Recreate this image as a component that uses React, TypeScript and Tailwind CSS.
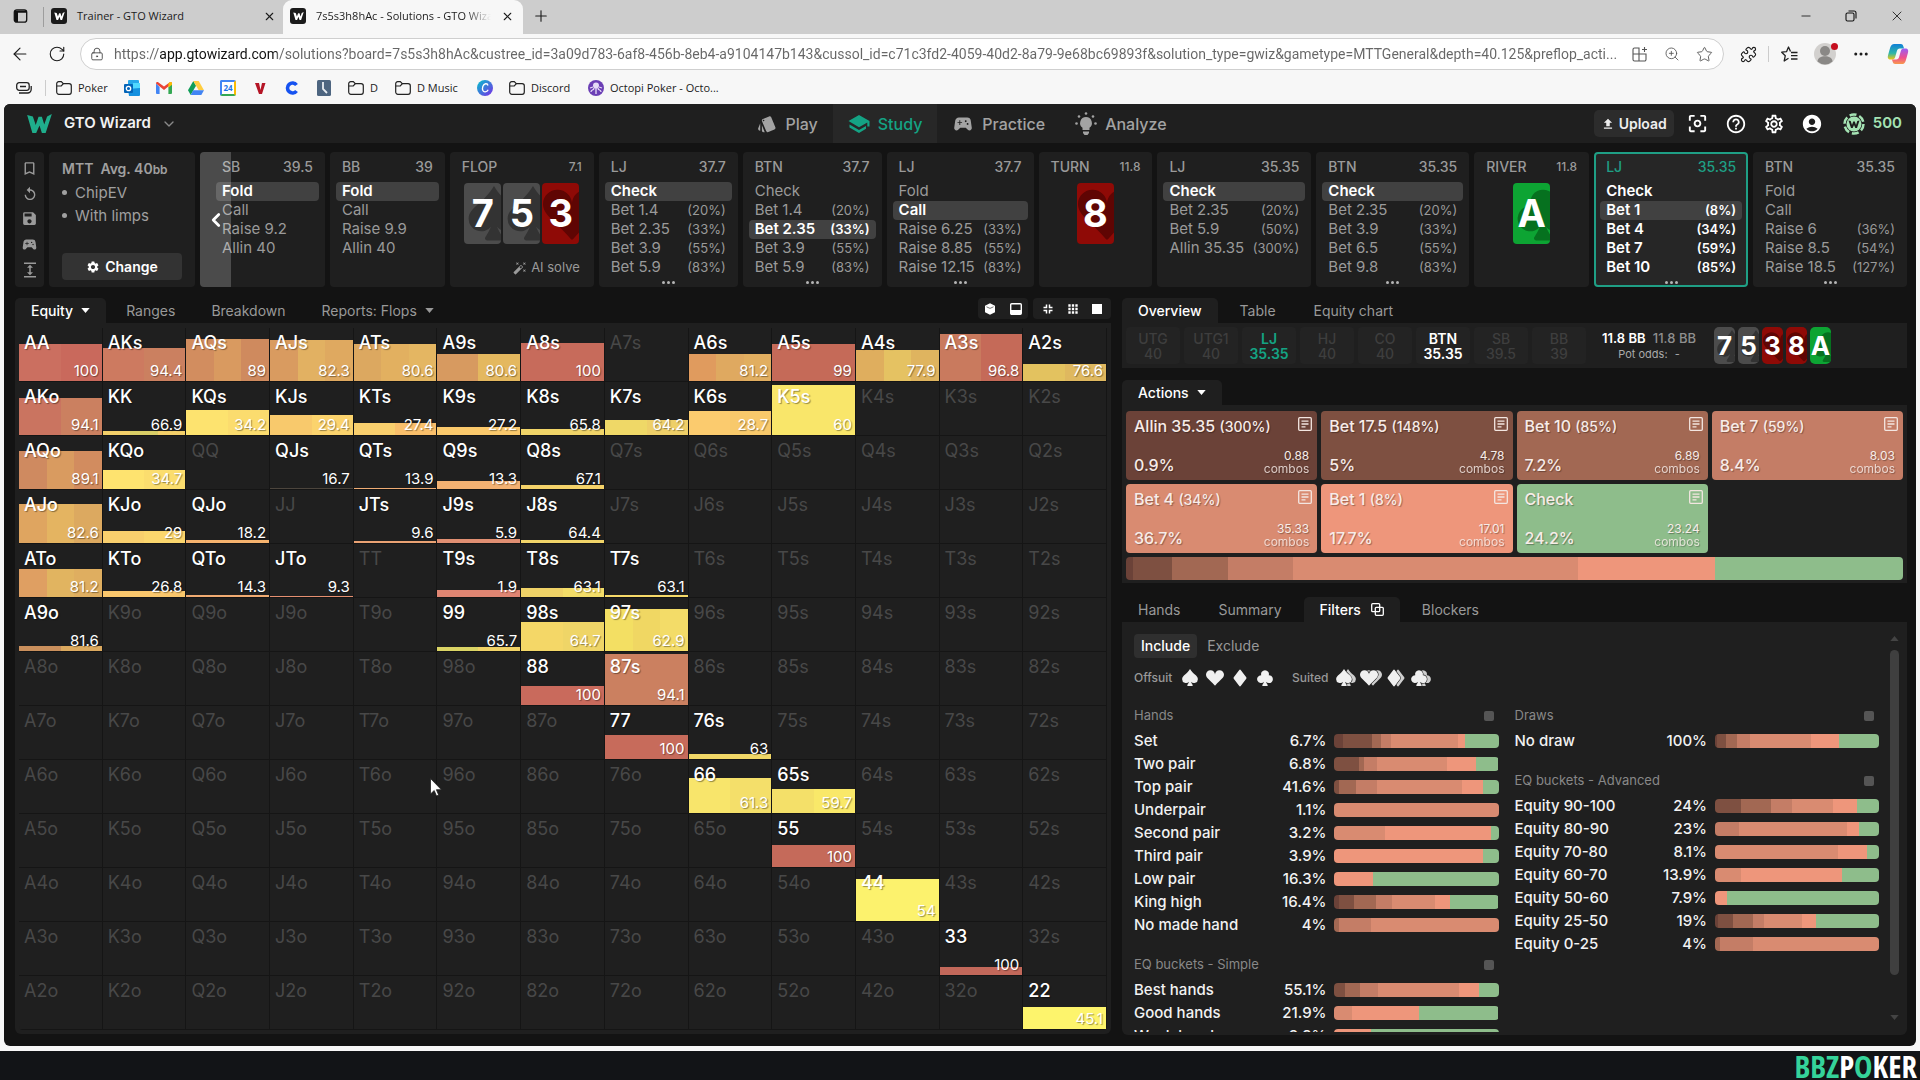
'use client';

import type { ReactNode } from 'react';
import clsx from 'clsx';
import {
  ArrowLeft,
  ChevronDown,
  ChevronLeft,
  Ellipsis,
  LockKeyhole,
  Minus,
  Plus,
  Puzzle,
  RotateCw,
  Star,
  X,
  ZoomIn,
} from 'lucide-react';
import {
  MdAccountCircle,
  MdApps,
  MdAutoFixHigh,
  MdBookmarkBorder,
  MdCenterFocusWeak,
  MdExpand,
  MdFileUpload,
  MdHelpOutline,
  MdOutlineSettings,
  MdReplay,
  MdSave,
  MdSchool,
  MdSettings,
  MdSportsEsports,
  MdStyle,
} from 'react-icons/md';
import { BsSuitClubFill, BsSuitDiamondFill, BsSuitHeartFill, BsSuitSpadeFill } from 'react-icons/bs';

type Suit = 'spade' | 'heart' | 'diamond' | 'club';

interface Card {
  rank: string;
  suit: Suit;
}

interface Option {
  label: string;
  pct?: string;
}

interface Street {
  name: string;
  stack: string;
  options?: Option[];
  selected?: number;
  active?: boolean;
  more?: boolean;
  cards?: Card[];
  aiSolve?: boolean;
}

interface HandCell {
  equity: string;
  // height of the coloured bar, in px
  weight: number;
  colors: string[];
}

interface BarRow {
  label: string;
  pct: string;
  // all-in, 17.5, 10, 7, 4, 1, check
  split: number[];
}

const ACTION_COLORS = ['#6b4238', '#7e5041', '#a26853', '#c47d66', '#d98b71', '#ee967b', '#8ebd8b'];

const suitIcons = {
  spade: BsSuitSpadeFill,
  heart: BsSuitHeartFill,
  diamond: BsSuitDiamondFill,
  club: BsSuitClubFill,
};

const streets: Street[] = [
  {
    name: 'SB',
    stack: '39.5',
    selected: 0,
    options: [{ label: 'Fold' }, { label: 'Call' }, { label: 'Raise 9.2' }, { label: 'Allin 40' }],
  },
  {
    name: 'BB',
    stack: '39',
    selected: 0,
    options: [{ label: 'Fold' }, { label: 'Call' }, { label: 'Raise 9.9' }, { label: 'Allin 40' }],
  },
  {
    name: 'FLOP',
    stack: '7.1',
    cards: [
      { rank: '7', suit: 'spade' },
      { rank: '5', suit: 'spade' },
      { rank: '3', suit: 'heart' },
    ],
    aiSolve: true,
  },
  {
    name: 'LJ',
    stack: '37.7',
    selected: 0,
    more: true,
    options: [
      { label: 'Check' },
      { label: 'Bet 1.4', pct: '(20%)' },
      { label: 'Bet 2.35', pct: '(33%)' },
      { label: 'Bet 3.9', pct: '(55%)' },
      { label: 'Bet 5.9', pct: '(83%)' },
    ],
  },
  {
    name: 'BTN',
    stack: '37.7',
    selected: 2,
    more: true,
    options: [
      { label: 'Check' },
      { label: 'Bet 1.4', pct: '(20%)' },
      { label: 'Bet 2.35', pct: '(33%)' },
      { label: 'Bet 3.9', pct: '(55%)' },
      { label: 'Bet 5.9', pct: '(83%)' },
    ],
  },
  {
    name: 'LJ',
    stack: '37.7',
    selected: 1,
    more: true,
    options: [
      { label: 'Fold' },
      { label: 'Call' },
      { label: 'Raise 6.25', pct: '(33%)' },
      { label: 'Raise 8.85', pct: '(55%)' },
      { label: 'Raise 12.15', pct: '(83%)' },
    ],
  },
  { name: 'TURN', stack: '11.8', cards: [{ rank: '8', suit: 'heart' }] },
  {
    name: 'LJ',
    stack: '35.35',
    selected: 0,
    options: [
      { label: 'Check' },
      { label: 'Bet 2.35', pct: '(20%)' },
      { label: 'Bet 5.9', pct: '(50%)' },
      { label: 'Allin 35.35', pct: '(300%)' },
    ],
  },
  {
    name: 'BTN',
    stack: '35.35',
    selected: 0,
    more: true,
    options: [
      { label: 'Check' },
      { label: 'Bet 2.35', pct: '(20%)' },
      { label: 'Bet 3.9', pct: '(33%)' },
      { label: 'Bet 6.5', pct: '(55%)' },
      { label: 'Bet 9.8', pct: '(83%)' },
    ],
  },
  { name: 'RIVER', stack: '11.8', cards: [{ rank: 'A', suit: 'club' }] },
  {
    name: 'LJ',
    stack: '35.35',
    selected: 1,
    active: true,
    more: true,
    options: [
      { label: 'Check' },
      { label: 'Bet 1', pct: '(8%)' },
      { label: 'Bet 4', pct: '(34%)' },
      { label: 'Bet 7', pct: '(59%)' },
      { label: 'Bet 10', pct: '(85%)' },
    ],
  },
  {
    name: 'BTN',
    stack: '35.35',
    more: true,
    options: [
      { label: 'Fold' },
      { label: 'Call' },
      { label: 'Raise 6', pct: '(36%)' },
      { label: 'Raise 8.5', pct: '(54%)' },
      { label: 'Raise 18.5', pct: '(127%)' },
    ],
  },
];

const RANKS = ['A', 'K', 'Q', 'J', 'T', '9', '8', '7', '6', '5', '4', '3', '2'];

const hands: Record<string, HandCell> = {
  AA: { equity: '100', weight: 37, colors: ['#cb6f60', '#c9695c'] },
  AKs: { equity: '94.4', weight: 33, colors: ['#cd7a60', '#cb8060'] },
  AQs: { equity: '89', weight: 42, colors: ['#d28d5f', '#d99a60', '#cf8a5e'] },
  AJs: { equity: '82.3', weight: 41, colors: ['#d99b60', '#e2b162', '#dfa960'] },
  ATs: { equity: '80.6', weight: 37, colors: ['#dca860', '#e2b060', '#e4b662'] },
  A9s: { equity: '80.6', weight: 27, colors: ['#d79a60', '#e4b85f'] },
  A8s: { equity: '100', weight: 38, colors: ['#c76b5b'] },
  A6s: { equity: '81.2', weight: 27, colors: ['#e09b5e', '#dfa960', '#e1ae60'] },
  A5s: { equity: '99', weight: 37, colors: ['#c56a58'] },
  A4s: { equity: '77.9', weight: 31, colors: ['#dfae5e', '#e5c262', '#dfb45f'] },
  A3s: { equity: '96.8', weight: 47, colors: ['#c97a5e', '#c56a58'] },
  A2s: { equity: '76.6', weight: 17, colors: ['#e3c25f', '#dfb85f'] },
  AKo: { equity: '94.1', weight: 37, colors: ['#ca7460', '#cb8060'] },
  KK: { equity: '66.9', weight: 4, colors: ['#f3cf69', '#d8cd66', '#f3cf69'] },
  KQs: { equity: '34.2', weight: 25, colors: ['#fde36f', '#fbdc6e'] },
  KJs: { equity: '29.4', weight: 20, colors: ['#f8c96c', '#fbd36d'] },
  KTs: { equity: '27.4', weight: 12, colors: ['#f9cf6d', '#f9bf6b'] },
  K9s: { equity: '27.2', weight: 8, colors: ['#fac96c'] },
  K8s: { equity: '65.8', weight: 6, colors: ['#f0d468'] },
  K7s: { equity: '64.2', weight: 15, colors: ['#efd867', '#eecf68'] },
  K6s: { equity: '28.7', weight: 24, colors: ['#fbcb6e', '#f8c96b'] },
  K5s: { equity: '60', weight: 50, colors: ['#f9e66a'] },
  AQo: { equity: '89.1', weight: 38, colors: ['#cf8a60', '#d99b60', '#d28c5f'] },
  KQo: { equity: '34.7', weight: 19, colors: ['#fee36f', '#fbdd6e'] },
  QJs: { equity: '16.7', weight: 1, colors: ['#4c453d'] },
  QTs: { equity: '13.9', weight: 1, colors: ['#efac74'] },
  Q9s: { equity: '13.3', weight: 8, colors: ['#f3b172'] },
  Q8s: { equity: '67.1', weight: 4, colors: ['#f4d269'] },
  AJo: { equity: '82.6', weight: 39, colors: ['#dfa560', '#e4b461', '#dca960'] },
  KJo: { equity: '29', weight: 12, colors: ['#f9cf6d', '#fbd66d'] },
  QJo: { equity: '18.2', weight: 3, colors: ['#f6b36e'] },
  JTs: { equity: '9.6', weight: 2, colors: ['#eaa273'] },
  J9s: { equity: '5.9', weight: 4, colors: ['#e08f72'] },
  J8s: { equity: '64.4', weight: 3, colors: ['#f1d468'] },
  ATo: { equity: '81.2', weight: 28, colors: ['#df9f62', '#e1b460', '#dfae60'] },
  KTo: { equity: '26.8', weight: 6, colors: ['#fac76c'] },
  QTo: { equity: '14.3', weight: 2, colors: ['#f0ab72'] },
  JTo: { equity: '9.3', weight: 1, colors: ['#e58f70'] },
  T9s: { equity: '1.9', weight: 7, colors: ['#df8572'] },
  T8s: { equity: '63.1', weight: 9, colors: ['#efd267', '#f3dd68'] },
  T7s: { equity: '63.1', weight: 2, colors: ['#f6d969'] },
  A9o: { equity: '81.6', weight: 5, colors: ['#c98f5c', '#dba95f'] },
  '99': { equity: '65.7', weight: 4, colors: ['#dad465', '#f1d367'] },
  '98s': { equity: '64.7', weight: 29, colors: ['#f4d767', '#efd567'] },
  '97s': { equity: '62.9', weight: 42, colors: ['#f3df63', '#f0d763', '#f3dc68'] },
  '88': { equity: '100', weight: 19, colors: ['#c96a5c'] },
  '87s': { equity: '94.1', weight: 51, colors: ['#cb8060'] },
  '77': { equity: '100', weight: 24, colors: ['#c76b5b'] },
  '76s': { equity: '63', weight: 5, colors: ['#f1d767'] },
  '66': { equity: '61.3', weight: 35, colors: ['#f8e56b', '#f4df6a'] },
  '65s': { equity: '59.7', weight: 24, colors: ['#f4e069', '#f9e869'] },
  '55': { equity: '100', weight: 22, colors: ['#c56a5a'] },
  '44': { equity: '54', weight: 42, colors: ['#fcf26d'] },
  '33': { equity: '100', weight: 8, colors: ['#c2685a'] },
  '22': { equity: '45.1', weight: 22, colors: ['#fdf46c'] },
};

const positions = [
  { name: 'UTG', stack: '40' },
  { name: 'UTG1', stack: '40' },
  { name: 'LJ', stack: '35.35', tone: 'text-[#14a384]' },
  { name: 'HJ', stack: '40' },
  { name: 'CO', stack: '40' },
  { name: 'BTN', stack: '35.35', tone: 'text-white' },
  { name: 'SB', stack: '39.5' },
  { name: 'BB', stack: '39' },
];

const board: Card[] = [
  { rank: '7', suit: 'spade' },
  { rank: '5', suit: 'spade' },
  { rank: '3', suit: 'heart' },
  { rank: '8', suit: 'heart' },
  { rank: 'A', suit: 'club' },
];

const actions = [
  { label: 'Allin 35.35', size: '(300%)', pct: '0.9%', combos: '0.88', bg: 'bg-[#6b4238]' },
  { label: 'Bet 17.5', size: '(148%)', pct: '5%', combos: '4.78', bg: 'bg-[#7e5041]' },
  { label: 'Bet 10', size: '(85%)', pct: '7.2%', combos: '6.89', bg: 'bg-[#a26853]' },
  { label: 'Bet 7', size: '(59%)', pct: '8.4%', combos: '8.03', bg: 'bg-[#c47d66]' },
  { label: 'Bet 4', size: '(34%)', pct: '36.7%', combos: '35.33', bg: 'bg-[#d98b71]' },
  { label: 'Bet 1', size: '(8%)', pct: '17.7%', combos: '17.01', bg: 'bg-[#ee967b]' },
  { label: 'Check', size: '', pct: '24.2%', combos: '23.24', bg: 'bg-[#8ebd8b]' },
];

const madeHands: BarRow[] = [
  { label: 'Set', pct: '6.7%', split: [17, 55, 17, 21, 128, 15, 64] },
  { label: 'Two pair', pct: '6.8%', split: [0, 48, 8, 26, 134, 57, 43] },
  { label: 'Top pair', pct: '41.6%', split: [0, 8, 33, 40, 164, 41, 30] },
  { label: 'Underpair', pct: '1.1%', split: [0, 0, 0, 0, 1, 0, 0] },
  { label: 'Second pair', pct: '3.2%', split: [0, 0, 0, 0, 97, 205, 14] },
  { label: 'Third pair', pct: '3.9%', split: [0, 0, 0, 0, 0, 286, 30] },
  { label: 'Low pair', pct: '16.3%', split: [0, 0, 0, 0, 0, 74, 242] },
  { label: 'King high', pct: '16.4%', split: [8, 30, 43, 30, 83, 30, 94] },
  { label: 'No made hand', pct: '4%', split: [0, 0, 8, 63, 245, 0, 0] },
];

const simpleBuckets: BarRow[] = [
  { label: 'Best hands', pct: '55.1%', split: [0, 20, 29, 35, 155, 40, 37] },
  { label: 'Good hands', pct: '21.9%', split: [0, 0, 0, 0, 33, 130, 153] },
  { label: 'Weak hands', pct: '3.9%', split: [0, 0, 0, 0, 0, 70, 246] },
];

const draws: BarRow[] = [{ label: 'No draw', pct: '100%', split: [3, 18, 22, 25, 118, 56, 77] }];

const advancedBuckets: BarRow[] = [
  { label: 'Equity 90-100', pct: '24%', split: [0, 50, 58, 42, 78, 47, 43] },
  { label: 'Equity 80-90', pct: '23%', split: [0, 0, 0, 47, 209, 24, 38] },
  { label: 'Equity 70-80', pct: '8.1%', split: [0, 0, 0, 0, 238, 56, 24] },
  { label: 'Equity 60-70', pct: '13.9%', split: [0, 0, 0, 0, 50, 196, 72] },
  { label: 'Equity 50-60', pct: '7.9%', split: [0, 0, 0, 0, 0, 23, 295] },
  { label: 'Equity 25-50', pct: '19%', split: [5, 30, 38, 22, 73, 27, 123] },
  { label: 'Equity 0-25', pct: '4%', split: [0, 0, 10, 63, 245, 0, 0] },
];

const URL_TEXT =
  'https://app.gtowizard.com/solutions?board=7s5s3h8hAc&custree_id=3a09d783-6af8-456b-8eb4-a9104147b143&cussol_id=c71c3fd2-4059-40d2-8a79-9e68bc69893f&solution_type=gwiz&gametype=MTTGeneral&depth=40.125&preflop_acti...';

function handName(row: number, col: number) {
  if (row === col) return RANKS[row] + RANKS[col];
  return row < col ? `${RANKS[row]}${RANKS[col]}s` : `${RANKS[col]}${RANKS[row]}o`;
}

// Hard colour stops, one equal slice per colour
function stripes(colors: string[]) {
  const step = 100 / colors.length;
  return `linear-gradient(90deg, ${colors
    .map((color, i) => `${color} ${i * step}% ${(i + 1) * step}%`)
    .join(', ')})`;
}

function Caret({ className }: { className?: string }) {
  return (
    <svg viewBox="0 0 10 6" className={clsx('shrink-0', className ?? 'ml-2 h-[5px] w-[9px]')} fill="currentColor">
      <path d="M0 0h10L5 6z" />
    </svg>
  );
}

function WMark({ className }: { className?: string }) {
  return (
    <svg viewBox="0 0 26 20" className={className} fill="currentColor">
      <path d="M0 1l6 1.5 3 9L12 3h3.500l2.500 8 3-8.500L26 0l-6.500 20h-4L13 12l-3.500 8h-4z" />
    </svg>
  );
}

function Favicon() {
  return (
    <span className="flex size-4 shrink-0 items-center justify-center rounded-[3px] bg-[#1b1b1b] text-white">
      <WMark className="h-2 w-[11px]" />
    </span>
  );
}

function Folder() {
  return (
    <svg viewBox="0 0 16 14" className="h-[14px] w-4 shrink-0" fill="none" stroke="#222" strokeWidth="1.2">
      <path d="M.7 11V2.800C.7 1.600 1.500.7 2.700.7h2.600l2 2h5.800c1.200 0 2.200.9 2.200 2.100V11c0 1.300-1 2.300-2.200 2.300H2.900C1.700 13.300.7 12.300.7 11z" />
      <path d="M.7 5h4.600l2-2.300" />
    </svg>
  );
}

function BrowserChrome() {
  return (
    <header className="font-['Open_Sans','Noto_Sans',sans-serif] text-[#1c1c1c]">
      <div className="flex h-[34px] items-center bg-[#cdcdcd] pr-[15px] *:pb-[2px]">
        <button aria-label="Tab actions" className="ml-[13px]">
          <svg viewBox="0 0 14 14" className="h-[14px] w-[15px]">
            <rect x=".8" y=".8" width="12.400" height="12.400" rx="2.500" fill="none" stroke="#111" strokeWidth="1.300" />
            <path d="M1 1.500h12v2.200H4.500V13H3a2 2 0 0 1-2-2z" fill="#111" />
          </svg>
        </button>
        <span className="ml-[15px] h-5 w-px bg-[#9d9d9d]" />
        <div className="ml-[7px] flex w-[232px] items-center gap-[10px] text-[11px]">
          <Favicon />
          <span className="flex-1">Trainer - GTO Wizard</span>
          <button aria-label="Close Trainer tab" className="mr-[7px]">
            <X size={13} strokeWidth={2} />
          </button>
        </div>
        <div className="flex h-full w-[240px] items-center gap-[10px] rounded-t-[9px] bg-[#f7f7f7] pl-[7px] text-[11px]">
          <Favicon />
          <span className="flex-1 overflow-hidden whitespace-nowrap mask-r-from-85%">
            7s5s3h8hAc - Solutions - GTO Wizard
          </span>
          <button aria-label="Close Solutions tab" className="mr-[9px]">
            <X size={13} strokeWidth={2} />
          </button>
        </div>
        <button aria-label="New tab" className="ml-[9px]">
          <Plus size={18} strokeWidth={1.5} />
        </button>
        <div className="ml-auto flex items-center gap-8">
          <button aria-label="Minimize">
            <Minus size={14} strokeWidth={1.5} />
          </button>
          <button aria-label="Restore">
            <svg viewBox="0 0 12 12" className="size-3" fill="none" stroke="#111" strokeWidth="1.100">
              <rect x="1" y="3" width="8" height="8" rx="1.500" />
              <path d="M3.500 1h5.500a2 2 0 0 1 2 2v5.500" />
            </svg>
          </button>
          <button aria-label="Close window">
            <X size={16} strokeWidth={1.300} />
          </button>
        </div>
      </div>

      <div className="flex h-10 items-center bg-[#f7f7f7] pr-[11px] pl-[10px]">
        <button aria-label="Back" className="mr-[18px]">
          <ArrowLeft size={20} strokeWidth={1.400} />
        </button>
        <button aria-label="Refresh" className="mr-[14px]">
          <RotateCw size={18} strokeWidth={1.500} />
        </button>
        <div className="flex h-8 flex-1 items-center rounded-full border border-[#cfcfcf] bg-white pr-[10px] pl-[9px]">
          <LockKeyhole size={14} strokeWidth={1.500} className="shrink-0 text-[#444]" />
          <input
            aria-label="Address bar"
            className="ml-[10px] min-w-0 flex-1 bg-[linear-gradient(90deg,#666_45px,#111_45px,#111_163px,#666_163px)] bg-clip-text font-['Roboto',sans-serif] text-sm text-transparent outline-none"
            defaultValue={URL_TEXT}
          />
          <div className="flex shrink-0 gap-4 pl-3 text-[#555]">
            <svg viewBox="0 0 16 16" className="size-4" fill="none" stroke="currentColor" strokeWidth="1.100">
              <path d="M7 2H2.500A1.500 1.500 0 0 0 1 3.500V8h6zM1 8v5.500A1.500 1.500 0 0 0 2.500 15H7V8zM7 8h7v5.500a1.500 1.500 0 0 1-1.500 1.500H7zM12.500 1v5M10 3.500h5" />
            </svg>
            <ZoomIn size={16} strokeWidth={1.300} />
            <Star size={17} strokeWidth={1.300} />
          </div>
        </div>
        <Puzzle size={17} strokeWidth={1.600} className="ml-4" />
        <span className="ml-[11px] h-4 w-px bg-[#ccc]" />
        <svg viewBox="0 0 17 16" className="ml-3 h-4 w-[17px]" fill="none" stroke="#222" strokeWidth="1.300" strokeLinejoin="round">
          <path d="M9.500 5.500L7.500 1 5.500 5.700.7 6.200l3.600 3.500L3.200 15l4.300-2.700M10 6.500h6.500M10 9.700h6.500M10 13h6.500" />
        </svg>
        <span className="relative ml-4 size-[22px] rounded-full bg-[#d2d0ce]">
          <svg viewBox="0 0 22 22" className="size-[22px]" fill="#8a8886">
            <circle cx="11" cy="8" r="5" />
            <path d="M3.500 18.500c0-7 15-7 15 0a11 11 0 0 1-15 0z" />
          </svg>
          <span className="absolute top-0 -right-[2px] size-[7px] rounded-full bg-[#c50f1f]" />
        </span>
        <Ellipsis size={18} className="ml-4" />
        <svg viewBox="0 0 24 24" className="ml-[17px] size-[22px]">
          <defs>
            <linearGradient id="copilot-a" x1="0" y1="0" x2="0" y2="1">
              <stop offset="0" stopColor="#0f7fd8" />
              <stop offset=".6" stopColor="#2fb7a8" />
              <stop offset="1" stopColor="#f2c811" />
            </linearGradient>
            <linearGradient id="copilot-b" x1="0" y1="0" x2="0" y2="1">
              <stop offset="0" stopColor="#9a5cf5" />
              <stop offset=".6" stopColor="#f0508c" />
              <stop offset="1" stopColor="#f89b4b" />
            </linearGradient>
          </defs>
          <path d="M8 1h7c2 0 2.500 1.500 3 3l.6 2H14c-2 0-2.700 1-3.200 2.700L9 15c-.6 2-1.300 3-3.400 3H4c-3 0-3.600-2-2.800-5l2.300-8C4.200 2.500 5.500 1 8 1z" fill="url(#copilot-a)" />
          <path d="M16 23H9c-2 0-2.500-1.500-3-3l-.6-2H10c2 0 2.700-1 3.200-2.700L15 9c.6-2 1.300-3 3.400-3H20c3 0 3.600 2 2.800 5l-2.300 8c-.7 2.500-2 4-4.500 4z" fill="url(#copilot-b)" />
        </svg>
      </div>

      <nav className="flex h-[30px] items-center gap-4 bg-[#f7f7f7] pb-[2px] pl-4 text-[11px]">
        <svg viewBox="0 0 16 12" className="h-3 w-4" fill="none" stroke="#222" strokeWidth="1.300">
          <rect x=".7" y=".7" width="12.500" height="7.600" rx="2.500" />
          <path d="M4 4.500h6M3 11h8.500a3.700 3.700 0 0 0 3.700-3.700V4" />
        </svg>
        <span className="-ml-[3px] h-4 w-px bg-[#ccc]" />
        <a href="#poker" className="-ml-[6px] flex w-[52px] items-center gap-[6px]">
          <Folder />
          Poker
        </a>
        <a href="#outlook" aria-label="Outlook">
          <svg viewBox="0 0 16 16" className="size-4">
            <rect x="4" y="0" width="11" height="13" rx="1" fill="#28a8ea" />
            <rect x="9" y="3" width="7" height="7" fill="#50d9ff" />
            <path d="M4 9l12-1v7a1 1 0 0 1-1 1H5z" fill="#1490df" />
            <rect x="0" y="4" width="9" height="9" rx="1" fill="#0364b8" />
            <circle cx="4.500" cy="8.500" r="2.200" fill="none" stroke="#fff" strokeWidth="1.300" />
          </svg>
        </a>
        <a href="#gmail" aria-label="Gmail">
          <svg viewBox="0 0 16 12" className="h-3 w-4">
            <path d="M0 1.500V11a1 1 0 0 0 1 1h2.600V5z" fill="#4285f4" />
            <path d="M16 1.500V11a1 1 0 0 1-1 1h-2.600V5z" fill="#34a853" />
            <path d="M0 1.500C0 0 1.500-.4 2.500.4L8 4.600 13.500.4C14.500-.4 16 0 16 1.500L8 8z" fill="#ea4335" />
            <path d="M12.400 1.200l1.100-.8C14.500-.4 16 0 16 1.500v1.300l-3.600 2.700z" fill="#fbbc04" />
          </svg>
        </a>
        <a href="#drive" aria-label="Drive">
          <svg viewBox="0 0 16 14" className="h-[14px] w-4">
            <path d="M5.300 0L0 9.300 2.700 14 8 4.700z" fill="#0f9d58" />
            <path d="M5.300 0h5.400L16 9.300h-5.300z" fill="#ffcd40" />
            <path d="M5.300 9.300H16L13.300 14H2.700z" fill="#4285f4" />
          </svg>
        </a>
        <a
          href="#calendar"
          aria-label="Calendar"
          className="flex size-4 items-center justify-center rounded-[2px] border-2 border-t-[#4285f4] border-r-[#fbbc04] border-b-[#34a853] border-l-[#4285f4] bg-white text-[8px] font-bold text-[#1a73e8]"
        >
          24
        </a>
        <a href="#v" aria-label="Vegas">
          <svg viewBox="0 0 16 16" className="size-4" fill="#b51526">
            <path d="M3 3h4l1.500 7L10 3h3.500L10 14H7z" />
          </svg>
        </a>
        <a href="#c" aria-label="Coinbase">
          <svg viewBox="0 0 16 16" className="size-4" fill="none" stroke="#1652f0" strokeWidth="3.600">
            <path d="M12.500 5A5 5 0 1 0 12.500 11" />
          </svg>
        </a>
        <a href="#clock" aria-label="Clock">
          <svg viewBox="0 0 16 16" className="size-4">
            <rect x="1" width="14" height="16" rx="1.500" fill="#4d6580" />
            <path d="M7 2v7l4 4" fill="none" stroke="#e8edf2" strokeWidth="1.800" />
          </svg>
        </a>
        <a href="#d" className="flex w-[31px] items-center gap-[6px]">
          <Folder />
          D
        </a>
        <a href="#d-music" className="flex w-[66px] items-center gap-[6px] whitespace-nowrap">
          <Folder />
          D Music
        </a>
        <a href="#canva" aria-label="Canva">
          <svg viewBox="0 0 16 16" className="size-4">
            <defs>
              <linearGradient id="canva" x1="0" y1="0" x2="1" y2="1">
                <stop offset="0" stopColor="#00c4cc" />
                <stop offset="1" stopColor="#7d2ae8" />
              </linearGradient>
            </defs>
            <circle cx="8" cy="8" r="8" fill="url(#canva)" />
            <path d="M11 5.500C10.500 3 7 3 5.800 6.500c-1 3.200.3 5.500 2.400 5.300 1.500-.1 2.500-1 3-2" fill="none" stroke="#fff" strokeWidth="1.300" />
          </svg>
        </a>
        <a href="#discord" className="flex w-[63px] items-center gap-[6px]">
          <Folder />
          Discord
        </a>
        <a href="#octopi" className="flex items-center gap-[6px] whitespace-nowrap">
          <svg viewBox="0 0 16 16" className="size-4">
            <circle cx="8" cy="8" r="8" fill="#6b3fb5" />
            <circle cx="8" cy="5.500" r="3" fill="#e6dcf7" />
            <path d="M8 8v6M6 8c0 3-3 1-3 4M10 8c0 3 3 1 3 4M5 7L2 8M11 7l3 1" stroke="#e6dcf7" strokeWidth="1.300" fill="none" />
          </svg>
          Octopi Poker - Octo...
        </a>
      </nav>
    </header>
  );
}

function LightBulb() {
  return (
    <svg viewBox="0 0 22 24" className="h-6 w-[22px]" fill="currentColor">
      <path d="M11 5a6 6 0 0 1 3.500 10.800V18h-7v-2.200A6 6 0 0 1 11 5zM8 19.500h6V21l-1.500 2h-3L8 21z" />
      <circle cx="11" cy="1.500" r="1.300" />
      <circle cx="4" cy="4.500" r="1.300" />
      <circle cx="18" cy="4.500" r="1.300" />
      <circle cx="1.500" cy="11.500" r="1.300" />
      <circle cx="20.500" cy="11.500" r="1.300" />
    </svg>
  );
}

function StudyIcon() {
  return (
    <svg viewBox="0 0 22 18" className="h-[18px] w-[22px]" fill="currentColor">
      <path d="M11 0l10.500 6v5.500h-2.200V7.600L11 12.300.5 6z" />
      <path d="M1.500 9.500L11 15l7-4v2.800L11 18l-9.500-5.500z" />
    </svg>
  );
}

function TopBar() {
  const nav = [
    { label: 'Play', icon: <MdStyle size={20} /> },
    { label: 'Study', icon: <StudyIcon />, active: true },
    { label: 'Practice', icon: <MdSportsEsports size={22} /> },
    { label: 'Analyze', icon: <LightBulb /> },
  ];

  return (
    <div className="grid h-[39px] grid-cols-[1fr_auto_1fr] items-center bg-[#1f1f1f]">
      <div className="flex items-center pl-[23px]">
        <WMark className="h-[19px] w-[25px] text-[#1fae8c]" />
        <span className="ml-3 text-[15px] font-semibold text-[#f2f2f2]">GTO Wizard</span>
        <button aria-label="Switch product" className="ml-[10px] text-[#8a8a8a]">
          <ChevronDown size={16} />
        </button>
      </div>
      <nav className="ml-1 flex h-full text-base font-medium text-[#a3a3a3]">
        {nav.map((item) => (
          <a
            key={item.label}
            href={`#${item.label.toLowerCase()}`}
            className={clsx(
              'flex items-center gap-2 px-[15px]',
              item.active && 'bg-[#272727] text-[#14a384]',
            )}
          >
            {item.icon}
            {item.label}
          </a>
        ))}
      </nav>
      <div className="flex items-center justify-end gap-4 pr-[14px] text-white">
        <button className="flex h-[27px] items-center gap-1 rounded-[5px] bg-[#2c2c2c] px-[7px] text-sm font-semibold text-[#eee]">
          <MdFileUpload size={14} />
          Upload
        </button>
        <button aria-label="Scan" className="-ml-1"><MdCenterFocusWeak size={23} /></button>
        <button aria-label="Help"><MdHelpOutline size={22} /></button>
        <button aria-label="Settings"><MdOutlineSettings size={22} /></button>
        <button aria-label="Account"><MdAccountCircle size={22} /></button>
        <div className="ml-1 flex items-center gap-2 text-[15px] font-semibold text-[#a5e3b4]">
          <svg viewBox="0 0 22 22" className="size-[22px]">
            <circle cx="11" cy="11" r="9.500" fill="none" stroke="#a5e3b4" strokeWidth="2.500" strokeDasharray="7 3" />
            <circle cx="11" cy="11" r="7.500" fill="#a5e3b4" />
            <path d="M5.500 7.500l2.200.5 1.300 4 1.200-3.500h1.600L13 12l1.300-4 2.200-.5L14 15h-1.700L11 12l-1.300 3H8z" fill="#1c1c1c" />
          </svg>
          500
        </div>
      </div>
    </div>
  );
}

function PlayingCard({ card, small }: { card: Card; small?: boolean }) {
  const Icon = suitIcons[card.suit];
  return (
    <div
      className={clsx(
        'relative flex shrink-0 items-center justify-center overflow-hidden font-bold text-white',
        small ? 'h-[37px] w-[21px] rounded-[5px] text-[26px]' : 'h-[61px] w-[37px] rounded-[4px] text-[38px]',
        card.suit === 'spade' && 'bg-[#4c4c4c]',
        card.suit === 'heart' && 'bg-[#8f0a06]',
        card.suit === 'club' && 'bg-[#0da433]',
      )}
    >
      <Icon
        className={clsx(
          'absolute',
          small ? '-right-[14px] bottom-0 size-[34px]' : '-right-[22px] bottom-0 size-[58px]',
          card.suit === 'spade' && 'text-[#333]',
          card.suit === 'heart' && 'text-[#5f0503]',
          card.suit === 'club' && 'text-[#06711f]',
        )}
      />
      <span className="relative">{card.rank}</span>
    </div>
  );
}

function StreetCard({ street }: { street: Street }) {
  const { options, cards, selected, active } = street;
  return (
    <section
      className={clsx(
        'flex h-[135px] min-w-0 flex-col rounded-[4px] border-2 px-1',
        active ? 'border-[#1f9f85] bg-[#262626]' : 'border-transparent bg-[#1f1f1f]',
      )}
    >
      <div
        className={clsx(
          'flex h-[28px] shrink-0 items-center justify-between px-[6px] pb-[2px] text-sm font-medium',
          active ? 'text-[#1f9f85]' : 'text-[#9a9a9a]',
        )}
      >
        <span>{street.name}</span>
        <span className={clsx(cards && 'text-xs')}>{street.stack}</span>
      </div>
      {options?.map((option, i) => (
        <button
          key={option.label}
          className={clsx(
            'flex h-[19px] shrink-0 items-center justify-between rounded-[4px] px-[6px] text-[15px] whitespace-nowrap',
            i === selected ? 'bg-[#414141]' : '',
            i === selected || active ? 'font-semibold text-white' : 'text-[#9a9a9a]',
          )}
        >
          <span>{option.label}</span>
          <span className="text-[13px]">{option.pct}</span>
        </button>
      ))}
      {street.more && (
        <span className="mt-1 flex justify-center gap-[2px] text-[#b5b5b5]">
          <i className="size-[3px] rounded-full bg-current" />
          <i className="size-[3px] rounded-full bg-current" />
          <i className="size-[3px] rounded-full bg-current" />
        </span>
      )}
      {cards && (
        <div className="mt-[1px] flex justify-center gap-[2px]">
          {cards.map((card) => (
            <PlayingCard key={card.rank} card={card} />
          ))}
        </div>
      )}
      {street.aiSolve && (
        <button className="mt-[14px] flex items-center gap-1 self-end pr-2 text-[13px] text-[#9a9a9a]">
          <MdAutoFixHigh size={14} />
          AI solve
        </button>
      )}
    </section>
  );
}

function HistoryRow() {
  return (
    <div className="flex gap-[5px] pt-[9px] pr-[9px] pl-[11px]">
      <div className="flex h-[135px] w-[29px] flex-col items-center justify-between rounded-[4px] bg-[#1f1f1f] py-2 text-[#9a9a9a]">
        <button aria-label="Bookmark"><MdBookmarkBorder size={17} /></button>
        <button aria-label="Reset"><MdReplay size={16} /></button>
        <button aria-label="Save"><MdSave size={17} /></button>
        <button aria-label="Practice spot"><MdSportsEsports size={17} /></button>
        <button aria-label="Expand"><MdExpand size={18} /></button>
      </div>
      <div className="flex h-[135px] w-[146px] flex-col rounded-[4px] bg-[#1f1f1f] px-[13px] pt-[7px] text-[15px] text-[#a0a0a0]">
        <p className="text-sm font-semibold whitespace-nowrap">
          MTT&ensp;Avg. 40<span className="text-xs">bb</span>
        </p>
        <ul className="mt-[2px] leading-[23px]">
          <li className="flex items-center gap-2">
            <i className="size-[5px] rounded-full bg-current" />
            ChipEV
          </li>
          <li className="flex items-center gap-2">
            <i className="size-[5px] rounded-full bg-current" />
            With limps
          </li>
        </ul>
        <button className="mt-auto mb-[7px] flex h-[27px] items-center justify-center gap-[5px] rounded-[4px] bg-[#333] text-sm font-semibold text-white">
          <MdSettings size={14} />
          Change
        </button>
      </div>
      <div className="relative grid min-w-0 flex-1 grid-cols-[125fr_115fr_144fr_139fr_139fr_147fr_114fr_154fr_153fr_115fr_154fr_154fr] gap-[5px]">
        {streets.map((street, i) => (
          <div key={i} className={clsx('min-w-0', i === 0 && 'rounded-[4px] bg-[#1f1f1f] pl-[10px]')}>
            <StreetCard street={street} />
          </div>
        ))}
        <button
          aria-label="Previous actions"
          className="absolute top-0 left-0 flex h-[135px] w-[31px] items-center justify-center rounded-l-[4px] bg-white/20 text-white"
        >
          <ChevronLeft size={22} strokeWidth={3} />
        </button>
      </div>
    </div>
  );
}

function PanelTab({ active, children }: { active?: boolean; children: ReactNode }) {
  return (
    <button
      role="tab"
      aria-selected={!!active}
      className={clsx(
        'flex h-[25px] items-center rounded-t-[5px] px-4 text-sm whitespace-nowrap',
        active ? 'bg-[#1f1f1f] font-medium text-white' : 'text-[#999]',
      )}
    >
      {children}
    </button>
  );
}

function HandMatrix() {
  return (
    <section className="min-w-0">
      <div className="flex">
        <div role="tablist" className="flex gap-1">
          <PanelTab active>
            Equity <Caret />
          </PanelTab>
          <PanelTab>Ranges</PanelTab>
          <PanelTab>Breakdown</PanelTab>
          <PanelTab>
            Reports: Flops <Caret />
          </PanelTab>
        </div>
        <div className="ml-auto flex h-[21px] gap-[5px] text-white">
          <div className="flex items-center gap-[14px] rounded-[4px] bg-[#1f1f1f] px-[6px]">
            <button aria-label="3D view">
              <svg viewBox="0 0 12 12" className="size-3" fill="currentColor">
                <path d="M6 .3l5 2.500v6.400l-5 2.500-5-2.500V2.800z" />
                <path d="M2.500 3.800L6 5.400l3.500-1.600" fill="none" stroke="#777" />
              </svg>
            </button>
            <button aria-label="Half fill">
              <svg viewBox="0 0 12 12" className="size-3">
                <rect x=".7" y=".7" width="10.600" height="10.600" rx="1" fill="none" stroke="#fff" strokeWidth="1.400" />
                <path d="M1 7h10v4H1z" fill="#fff" />
              </svg>
            </button>
          </div>
          <div className="flex items-center gap-3 rounded-[4px] bg-[#1f1f1f] px-[9px]">
            <button aria-label="Collapse">
              <svg viewBox="0 0 12 12" className="size-3" fill="none" stroke="#fff" strokeWidth="1.500">
                <path d="M4.500 1.500v3h-3M7.500 1.500v3h3M4.500 10.500v-3h-3M7.500 10.500v-3h3" />
              </svg>
            </button>
            <button aria-label="Grid view"><MdApps size={14} /></button>
            <button aria-label="Single view" className="size-[10px] bg-white" />
          </div>
        </div>
      </div>
      <div className="rounded-b-[6px] bg-[#1f1f1f] p-1 pt-[5px]">
        <div className="grid grid-cols-13 overflow-hidden rounded-b-[4px]">
          {RANKS.map((_, row) =>
            RANKS.map((__, col) => {
              const name = handName(row, col);
              const hand = hands[name];
              return (
                <button
                  key={name}
                  className="relative h-[54px] border-r border-b border-[#151515] bg-[#1f1f1f] text-left"
                >
                  {hand && (
                    <span
                      className="absolute inset-x-0 bottom-0"
                      style={{ height: hand.weight, background: stripes(hand.colors) }}
                    />
                  )}
                  <span
                    className={clsx(
                      'absolute top-1 left-[5px] text-lg leading-[22px]',
                      hand ? 'font-medium text-white text-shadow-[1px_1px_1px_#0006]' : 'text-[#484848]',
                    )}
                  >
                    {name}
                  </span>
                  {hand && (
                    <span className="absolute right-[3px] bottom-0 text-[15px] leading-5 text-white text-shadow-[1px_1px_1px_#0006]">
                      {hand.equity}
                    </span>
                  )}
                </button>
              );
            }),
          )}
        </div>
      </div>
    </section>
  );
}

function NoteIcon() {
  return (
    <svg
      viewBox="0 0 14 14"
      className="mt-[2px] -mr-[3px] size-[14px] shrink-0 self-start"
      fill="none"
      stroke="#f3e6e1"
      strokeWidth="1.300"
    >
      <rect x=".7" y=".7" width="12.600" height="12.600" rx="1" />
      <path d="M3.500 4.200h7M3.500 7h7M3.500 9.800h4" />
    </svg>
  );
}

function StackedBar({ split }: { split: number[] }) {
  return (
    <div className="flex h-[14px] overflow-hidden rounded-[4px]">
      {split.map((value, i) => (
        <span key={i} style={{ flexGrow: value, background: ACTION_COLORS[i] }} />
      ))}
    </div>
  );
}

function FilterGroup({ title, rows }: { title: string; rows: BarRow[] }) {
  return (
    <div>
      <label className="flex h-[26px] items-center justify-between pr-[5px] text-[13px] text-[#888]">
        {title}
        <input type="checkbox" className="size-[10px] appearance-none rounded-[2px] bg-[#555]" />
      </label>
      <table className="w-full table-fixed text-[15px] leading-[23px] font-medium text-[#f2f2f2]">
        <tbody>
          {rows.map((row) => (
            <tr key={row.label} className="h-[23px]">
              <th scope="row" className="p-0 text-left font-medium whitespace-nowrap">{row.label}</th>
              <td className="w-[64px] p-0 pr-2 text-right">{row.pct}</td>
              <td className="w-[45%] p-0">
                <StackedBar split={row.split} />
              </td>
            </tr>
          ))}
        </tbody>
      </table>
    </div>
  );
}

function SuitFilters() {
  const suits: Suit[] = ['spade', 'heart', 'diamond', 'club'];
  return (
    <div className="mt-[9px] flex h-[22px] items-center text-xs font-medium text-[#999]">
      <span className="w-[47px]">Offsuit</span>
      <div className="flex gap-[7px] text-[#f0f0f0]">
        {suits.map((suit) => {
          const Icon = suitIcons[suit];
          return (
            <button key={suit} aria-label={`Offsuit ${suit}`}><Icon size={18} /></button>
          );
        })}
      </div>
      <span className="ml-[18px] w-[43px]">Suited</span>
      <div className="flex gap-[3px]">
        {suits.map((suit) => {
          const Icon = suitIcons[suit];
          return (
            <button key={suit} aria-label={`Suited ${suit}`} className="relative w-[22px]">
              <Icon size={18} className="absolute top-0 left-1 text-[#cfcfcf]" />
              <Icon size={18} className="relative overflow-visible stroke-[#1f1f1f] stroke-1 text-[#f0f0f0] [paint-order:stroke]" />
            </button>
          );
        })}
      </div>
    </div>
  );
}

function DetailsPanel() {
  return (
    <section className="min-w-0">
      <div role="tablist" className="flex gap-[6px]">
        <PanelTab active>Overview</PanelTab>
        <PanelTab>Table</PanelTab>
        <PanelTab>Equity chart</PanelTab>
      </div>
      <div className="flex h-[45px] items-center bg-[#1f1f1f] pl-1">
        <div className="flex gap-1">
          {positions.map((position) => (
            <button
              key={position.name}
              className={clsx(
                'h-[37px] w-[54px] rounded-[4px] bg-[#232323] text-sm leading-[15px]',
                position.tone ? 'font-semibold' : 'font-medium',
                position.tone ?? 'text-[#3e3e3e]',
              )}
            >
              <span className="block">{position.name}</span>
              <span className="block">{position.stack}</span>
            </button>
          ))}
        </div>
        <div className="ml-4 text-center leading-4 whitespace-nowrap">
          <p className="text-[13px] font-semibold text-white">
            11.8 BB <span className="ml-1 font-medium text-[#8f8f8f]">11.8 BB</span>
          </p>
          <p className="text-[11px] text-[#aaa]">
            Pot odds: <span className="ml-1">-</span>
          </p>
        </div>
        <div className="ml-[18px] flex gap-[3px]">
          {board.map((card) => (
            <PlayingCard key={card.rank} card={card} small />
          ))}
        </div>
      </div>

      <div role="tablist" className="mt-3 flex">
        <PanelTab active>
          Actions <Caret />
        </PanelTab>
      </div>
      <div className="bg-[#1f1f1f] px-1 pt-[6px] pb-[3px]">
        <div className="grid grid-cols-4 gap-1">
          {actions.map((action) => (
            <button
              key={action.label}
              className={clsx(
                'flex h-[69px] flex-col justify-between rounded-[4px] px-2 pt-1 pb-[5px] text-left text-[#f7ece8] text-shadow-[1px_1px_1px_#0005]',
                action.bg,
              )}
            >
              <span className="flex w-full items-center justify-between text-base leading-[22px] font-medium whitespace-nowrap">
                <span>
                  {action.label} <span className="text-sm">{action.size}</span>
                </span>
                <NoteIcon />
              </span>
              <span className="flex w-full items-end justify-between">
                <span className="text-base leading-5 font-medium">{action.pct}</span>
                <span className="text-right text-xs leading-[13px]">
                  <span className="block">{action.combos}</span>
                  <span className="block opacity-80">combos</span>
                </span>
              </span>
            </button>
          ))}
        </div>
        <div className="mt-1 flex h-[23px] overflow-hidden rounded-[4px]">
          {[0.9, 5, 7.2, 8.4, 36.7, 17.7, 24.2].map((value, i) => (
            <span key={i} style={{ flexGrow: value, background: ACTION_COLORS[i] }} />
          ))}
        </div>
      </div>

      <div role="tablist" className="mt-[14px] flex gap-[6px]">
        <PanelTab>Hands</PanelTab>
        <PanelTab>Summary</PanelTab>
        <PanelTab active>
          Filters
          <svg viewBox="0 0 13 13" className="ml-[10px] size-[13px]" fill="none" stroke="currentColor" strokeWidth="1.300">
            <rect x=".7" y=".7" width="8" height="8" rx="1" />
            <rect x="4.300" y="4.300" width="8" height="8" rx="1" />
          </svg>
        </PanelTab>
        <PanelTab>Blockers</PanelTab>
      </div>
      <div className="flex h-[413px] rounded-b-[6px] bg-[#1f1f1f] pb-[3px] pl-3">
        <div className="min-w-0 flex-1 overflow-hidden pt-3">
          <div className="flex gap-[3px] text-sm">
            <button className="h-6 rounded-[4px] bg-[#2f2f2f] px-[7px] font-medium text-white">Include</button>
            <button className="h-6 px-[7px] text-[#999]">Exclude</button>
          </div>
          <SuitFilters />
          <div className="mt-[14px] grid grid-cols-2 gap-4">
            <div className="flex flex-col gap-4">
              <FilterGroup title="Hands" rows={madeHands} />
              <FilterGroup title="EQ buckets - Simple" rows={simpleBuckets} />
            </div>
            <div className="flex flex-col gap-4">
              <FilterGroup title="Draws" rows={draws} />
              <FilterGroup title="EQ buckets - Advanced" rows={advancedBuckets} />
            </div>
          </div>
        </div>
        <div className="mr-2 ml-[11px] flex w-[9px] flex-col items-center pt-[14px] pb-3 text-[#444]">
          <Caret className="h-[5px] w-[9px] rotate-180" />
          <span className="mt-[9px] h-[325px] w-[9px] rounded-full bg-[#3f3f3f]" />
          <Caret className="mt-auto h-[5px] w-[9px]" />
        </div>
      </div>
    </section>
  );
}

export default function App() {
  return (
    <div className="relative min-h-screen bg-[#f7f7f7]">
      <BrowserChrome />
      <main className="mx-1 overflow-hidden rounded-[6px] bg-[#131313] pb-[11px] font-['Inter',sans-serif]">
        <TopBar />
        <HistoryRow />
        <div className="mt-[11px] grid grid-cols-[1096fr_785fr] gap-[11px] pr-[9px] pl-[11px]">
          <HandMatrix />
          <DetailsPanel />
        </div>
      </main>
      <footer className="mt-[5px] flex h-[30px] items-center justify-end bg-[#121417] pr-[3px] font-['Liberation_Sans_Narrow','Open_Sans_Condensed','Roboto',sans-serif] text-[31px] leading-[30px] font-bold text-white">
        <span className="text-[#35d39a]">BBZ</span>P<span className="text-[#35d39a]">O</span>KER
      </footer>
      {/* mouse pointer over the matrix */}
      <svg viewBox="0 0 12 19" className="absolute top-[778px] left-[430px] h-[19px] w-3">
        <path d="M.5.5v15.500l3.700-3.500 2.300 5.500 2.200-.9-2.300-5.400h5z" fill="#fff" stroke="#222" strokeWidth=".8" />
      </svg>
    </div>
  );
}
